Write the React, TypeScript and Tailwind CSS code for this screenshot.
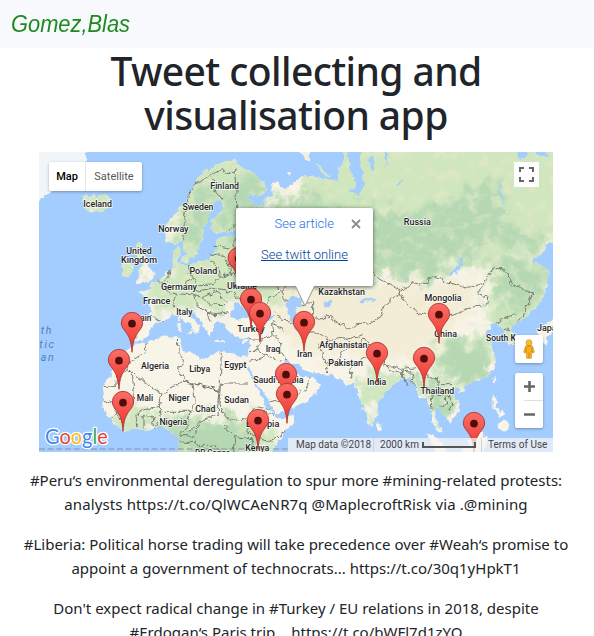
import React from "react";

const LAND = [
  // Eurasia joined with Africa
  "M600 32 L612 55 L640 68 L665 85 L690 108 L692 130 L670 146 L640 140 L628 148 L650 158 L660 178 L682 176 L690 150 L708 140 L705 112 L722 102 L735 120 L752 118 L775 102 L797 88 L837 86 L877 96 L905 98 L908 62 L922 45 L930 -20 L1600 -20 L1600 260 L1560 278 L1535 292 L1515 318 L1488 335 L1490 345 L1522 350 L1538 368 L1535 400 L1525 440 L1500 480 L1465 510 L1432 530 L1428 545 L1440 570 L1436 588 L1416 588 L1410 562 L1396 540 L1385 526 L1362 530 L1366 545 L1350 546 L1350 562 L1370 575 L1364 602 L1378 630 L1380 652 L1366 676 L1338 690 L1306 705 L1280 716 L1277 726 L1258 716 L1248 732 L1264 762 L1272 786 L1260 802 L1242 826 L1232 812 L1212 786 L1202 775 L1197 790 L1203 820 L1220 850 L1205 850 L1188 818 L1182 780 L1172 750 L1157 752 L1147 730 L1132 710 L1122 690 L1097 695 L1076 710 L1045 736 L1026 760 L1024 800 L1007 834 L996 826 L982 785 L962 728 L955 706 L934 712 L922 696 L905 694 L888 680 L840 678 L806 668 L786 648 L765 648 L752 632 L747 640 L770 668 L798 686 L824 690 L830 680 L852 714 L838 740 L808 762 L756 785 L722 798 L710 792 L706 770 L682 734 L656 700 L642 662 L636 655 L632 662 L655 702 L674 744 L694 780 L713 802 L724 812 L768 804 L776 806 L772 824 L748 852 L722 884 L690 940 L422 940 L430 890 L425 870 L400 846 L372 834 L345 845 L300 845 L260 850 L238 832 L215 802 L197 775 L205 750 L200 715 L224 680 L250 640 L272 612 L290 592 L290 584 L330 582 L380 566 L424 564 L437 570 L432 590 L442 606 L472 616 L504 638 L526 625 L552 610 L582 616 L632 624 L640 600 L640 572 L604 568 L578 555 L570 532 L548 520 L530 532 L532 550 L520 566 L508 548 L495 522 L478 500 L462 482 L452 480 L458 498 L480 522 L496 535 L488 544 L478 560 L470 540 L448 518 L430 506 L410 500 L386 518 L352 532 L342 555 L322 578 L298 580 L278 570 L282 508 L338 505 L342 480 L330 446 L305 434 L342 424 L345 410 L372 395 L402 366 L412 330 L412 305 L428 296 L434 318 L424 342 L442 352 L480 346 L518 330 L540 302 L542 278 L560 268 L604 262 L606 252 L580 250 L536 255 L526 240 L530 216 L562 184 L554 150 L538 160 L526 190 L512 215 L500 240 L502 270 L486 306 L474 332 L458 334 L444 310 L440 280 L418 288 L392 282 L386 244 L402 212 L448 166 L465 130 L490 82 L520 62 L560 44 Z",
  // Iceland
  "M138 160 L146 140 L160 150 L172 142 L205 140 L226 156 L226 176 L198 192 L170 194 L150 184 Z",
  // Great Britain and Ireland
  "M300 285 L318 290 L316 310 L334 330 L340 360 L358 375 L350 400 L318 402 L298 410 L310 388 L304 368 L312 345 L300 325 Z",
  "M258 345 L284 338 L294 356 L284 382 L258 388 Z",
  // Greenland
  "M-20 -20 L155 -20 L152 42 L110 60 L80 95 L46 130 L9 156 L-20 160 Z",
  // Danish isles, Sardinia, Corsica, Sicily, Crete, Cyprus
  "M438 326 L456 322 L458 342 L440 344 Z",
  "M424 528 L434 528 L434 550 L424 548 Z",
  "M426 506 L434 506 L432 522 L426 520 Z",
  "M450 552 L474 550 L470 564 Z",
  "M536 576 L562 577 L560 583 L536 581 Z",
  "M618 580 L634 577 L630 587 L618 587 Z",
  // Sri Lanka, Taiwan, Hainan, Philippines
  "M1022 822 L1036 828 L1038 846 L1026 850 Z",
  "M1370 684 L1380 682 L1376 706 L1370 704 Z",
  "M1268 720 L1286 716 L1284 730 L1270 734 Z",
  "M1370 744 L1384 744 L1386 764 L1378 778 L1392 790 L1386 794 L1370 776 Z",
  "M1384 796 L1400 790 L1406 800 L1392 810 Z M1386 828 L1404 815 L1418 826 L1412 848 L1390 846 Z",
  // Borneo, Sumatra
  "M1262 930 L1296 880 L1330 852 L1352 866 L1340 930 Z",
  "M1166 856 L1190 862 L1225 895 L1240 930 L1206 912 Z",
  // Japan
  "M1504 545 L1551 515 L1580 500 L1580 540 L1551 552 L1530 570 L1534 590 L1518 584 Z",
  // Novaya Zemlya and arctic isles
  "M782 -10 L812 -10 L824 36 L808 36 Z",
  "M836 46 L872 70 L884 88 L860 76 Z",
  "M754 70 L768 68 L768 82 L756 82 Z",
];

const INLAND_WATER = [
  "M934 -10 L974 -10 L970 50 L982 84 L984 116 L968 138 L944 136 L938 128 L960 120 L956 88 L940 64 Z",
  "M996 30 L1012 22 L1016 60 L1008 72 Z",
  "M1440 -10 L1476 -10 L1470 30 L1452 36 Z M1490 -10 L1530 -10 L1536 26 L1510 24 Z",
  "M588 484 L602 466 L618 472 L632 490 L650 478 L680 490 L716 508 L712 518 L680 518 L640 508 L604 516 L586 506 Z",
  "M656 470 L674 456 L682 462 L670 476 Z",
  "M748 466 L764 450 L794 450 L802 470 L780 478 L778 494 L792 506 L794 530 L814 540 L808 556 L778 552 L770 520 L752 490 Z",
  "M866 462 L888 458 L884 476 L868 478 Z",
  "M970 460 L990 450 L1020 452 L1018 458 L992 460 L976 470 Z",
  "M1238 384 L1262 354 L1272 326 L1280 330 L1276 354 L1258 380 L1242 388 Z",
  "M604 218 L616 216 L622 230 L608 236 Z M634 222 L642 210 L648 222 L640 230 Z",
  "M1390 110 L1396 108 L1398 150 L1412 172 L1404 170 L1392 144 Z",
  "M1090 98 L1100 92 L1096 112 L1086 116 Z M1046 12 L1054 12 L1050 60 Z",
];

// Boreal forest and other dark vegetation
const FOREST = [
  "M560 190 L604 60 L690 100 L690 180 L820 130 L900 180 L1000 170 L1090 200 L1210 180 L1380 90 L1400 200 L1480 250 L1540 270 L1480 310 L1400 290 L1340 310 L1240 350 L1180 390 L1100 400 L1000 350 L860 310 L740 280 L620 270 L540 250 Z",
  "M440 220 L480 130 L540 80 L530 200 L500 300 L450 330 Z",
  "M1370 390 L1410 340 L1540 350 L1530 430 L1450 520 L1400 500 L1400 430 Z",
  "M1210 620 L1250 580 L1330 600 L1380 640 L1340 690 L1260 710 L1220 680 Z",
  "M1130 690 L1220 720 L1260 800 L1240 820 L1190 800 L1160 745 Z",
  "M240 830 L300 838 L420 830 L560 820 L660 850 L640 940 L425 940 L400 850 L260 850 Z",
];

const MEADOW = [
  "M330 420 L420 340 L560 320 L740 300 L860 320 L900 410 L750 430 L700 480 L600 460 L570 510 L450 470 L340 500 Z",
  "M930 -60 L1640 -60 L1640 280 L1400 330 L1330 360 L1200 370 L1020 370 L860 300 L700 260 L800 100 Z",
  "M1370 330 L1560 320 L1560 450 L1440 600 L1400 600 L1360 500 Z",
  "M985 670 L1060 670 L1150 690 L1260 720 L1240 820 L1180 800 L1140 720 L1060 730 L1010 830 L970 740 Z",
  "M1200 560 L1280 580 L1330 540 L1380 600 L1370 680 L1280 710 L1190 690 Z",
  "M215 800 L330 790 L470 810 L650 800 L720 850 L700 940 L420 940 L390 840 L250 840 Z",
];

const DESERT = [
  "M740 440 L860 400 L980 420 L1090 410 L1200 420 L1330 410 L1300 480 L1220 560 L1190 620 L1060 640 L980 610 L880 640 L780 600 L700 520 Z",
];

const BORDERS = [
  "M440 280 L448 250 L446 200 L462 130 L480 104 L520 88 L530 76 L560 62 L584 78 L598 66",
  "M530 90 L540 130 L556 152 M596 62 L600 130 L602 180 L612 210 L586 245",
  "M604 262 L590 290 L598 320 L580 345 L584 376 L550 388 L546 356 L522 336",
  "M522 318 L560 322 L578 348 M536 292 L580 300",
  "M402 366 L398 390 L382 406 L366 398 M376 408 L390 430 L424 440 L410 462 L424 480 L432 504",
  "M456 350 L466 390 L490 410 L528 408 L550 388 M466 390 L450 404 L466 424 L490 432 L530 422 M430 438 L476 440 L500 448 L536 430 M476 440 L484 470 L512 496 L524 520",
  "M500 448 L520 468 L566 470 M536 430 L560 448 L574 466 M512 496 L540 500 L580 494 M530 420 L590 434 L620 462",
  "M584 376 L640 382 L700 396 L740 430 L690 460",
  "M340 505 L384 520 M296 520 L300 572",
  "M640 572 L680 574 L712 560 L706 530 L720 522 M706 530 L740 540 L746 552 M712 560 L730 578 L736 612 L752 636",
  "M680 574 L662 604 L640 612 M662 604 L690 622 L736 640 M640 640 L666 634 L690 622",
  "M700 762 L740 752 L780 742 L808 718 M808 718 L822 688",
  "M718 492 L746 520 L770 524 M740 430 L744 452 L760 454",
  "M800 470 L830 466 L830 504 L852 520 L870 500 L906 524 L940 544 L962 530 L1000 528 L1040 500 L1040 478 L1082 444 L1100 424",
  "M808 556 L848 554 L884 582 L900 566 L940 572 L980 560 M848 590 L860 620 L878 672 M862 640 L900 644 L920 610 L960 590 L984 570",
  "M984 570 L1000 590 L992 624 L962 640 L944 664 L944 694 M1000 590 L1040 620 L1044 648 L1098 664 L1150 658 M1050 650 L1060 668 L1098 672",
  "M740 430 L756 408 L850 400 L930 390 L1010 372 L1020 388 L1090 426 L1136 406 L1172 410 L1184 382 L1230 400 L1290 420 L1330 406 L1340 412",
  "M1090 426 L1100 454 L1142 492 L1200 506 L1250 502 L1312 476 L1352 466 L1356 448 L1322 440 L1340 412 L1370 362 L1406 362 L1430 412 L1466 428 L1490 432 L1466 500 L1442 520",
  "M1382 526 L1418 506 L1440 500 M1404 548 L1424 544",
  "M1100 668 L1100 690 L1118 712 M1100 672 L1130 676 L1126 700 L1142 720 M1150 658 L1180 690 L1200 690 L1216 710 M1164 710 L1184 730 L1188 780 M1200 690 L1212 720 L1240 744 L1250 768 L1238 786 M1188 734 L1226 742 L1232 768 L1208 778 M1216 710 L1254 710",
  "M330 582 L332 608 L286 640 L272 664 L378 736 L446 700 M424 566 L426 610 L442 640 L428 660 L446 700 L552 728 L556 612 M556 708 L636 708",
  "M200 716 L240 712 L242 678 L272 664 M286 680 L294 764 L232 770 M378 736 L370 772 L316 790 L300 800 L302 836 M370 772 L372 810 L362 832 M372 790 L462 790 L478 762 L470 702 M446 700 L552 728 L546 800 L500 820 L458 850",
  "M316 806 L352 808 L356 842 M324 806 L324 842 M462 790 L454 836 L430 862 L470 864 L500 822 M552 770 L570 812 L640 816 L632 850 L660 870 M560 830 L600 866 L646 872 M556 708 L552 770",
  "M646 790 L640 816 M646 790 L690 790 L712 806 M646 790 L660 776 L700 784 M660 870 L700 880 L750 850 M202 754 L232 770 L240 800 L226 814 M240 800 L258 820",
  "M430 882 L480 884 L500 896 L540 894 L560 912 M600 868 L594 912 M646 872 L650 912 M470 864 L480 884",
];

const LABELS: [string, number, number, number][] = [
  ["Finland", 566, 123, 86], ["Iceland", 185, 177, 86], ["Sweden", 486, 186, 93],
  ["Norway", 412, 252, 91], ["United", 309, 318, 77], ["Kingdom", 309, 345, 108],
  ["Poland", 502, 378, 83], ["Germany", 429, 427, 108], ["Ukraine", 618, 423, 90],
  ["France", 362, 469, 82], ["Italy", 445, 502, 49], ["Spain", 315, 520, 62],
  ["Turkey", 645, 553, 82], ["Iraq", 711, 612, 44], ["Iran", 806, 628, 46],
  ["Afghanistan", 922, 600, 145], ["Pakistan", 929, 655, 104], ["Kazakhstan", 917, 442, 140],
  ["Russia", 1144, 231, 81], ["Mongolia", 1221, 460, 111], ["China", 1229, 568, 68],
  ["India", 1022, 712, 58], ["Thailand", 1204, 739, 101], ["South Korea", 1420, 579, 140],
  ["Japan", 1540, 550, 74], ["Algeria", 357, 663, 84], ["Libya", 491, 672, 63],
  ["Egypt", 598, 661, 66], ["Saudi Arabia", 727, 706, 151], ["Mali", 327, 760, 49],
  ["Niger", 429, 760, 63], ["Chad", 508, 792, 60], ["Sudan", 602, 765, 74],
  ["Nigeria", 412, 832, 83], ["Ethiopia", 680, 838, 100], ["Kenya", 664, 908, 72],
  ["DR Congo", 530, 924, 106],
];

const PINS = [
  [608, 331], [645, 454], [672, 496], [1209, 499], [804, 523], [288, 526], [1023, 616],
  [1164, 631], [249, 637], [750, 679], [753, 739], [261, 763], [666, 817], [1314, 826],
];

function Pin({ x, y }: { x: number; y: number }) {
  return (
    <g transform={`translate(${x} ${y + 1})`}>
      <path
        d="M0 86 C-2 50 -10 37 -21 22 C-28 13 -32 7 -32 -2 A32 32 0 0 1 32 -2 C32 7 28 13 21 22 C10 37 2 50 0 86 Z"
        fill="url(#pinFill)"
        stroke="#a8322c"
        strokeWidth="2.5"
      />
      <circle r="11.5" fill="#4f0d0b" />
    </g>
  );
}

function MapDrawing() {
  return (
    <svg viewBox="9 12 1542 900" className="block h-[300px] w-[514px]" fontFamily="Roboto, sans-serif">
      <defs>
        <clipPath id="land">
          {LAND.map((d, i) => <path key={i} d={d} />)}
        </clipPath>
        <linearGradient id="pinFill" x1="0" y1="0" x2="0" y2="1">
          <stop offset="0" stopColor="#fb6f67" />
          <stop offset="0.6" stopColor="#f14a42" />
          <stop offset="1" stopColor="#d93a32" />
        </linearGradient>
        <filter id="coast" x="-30" y="-30" width="1640" height="1000" filterUnits="userSpaceOnUse" colorInterpolationFilters="sRGB">
          <feTurbulence type="fractalNoise" baseFrequency="0.05" numOctaves="3" seed="4" />
          <feDisplacementMap in="SourceGraphic" scale="20" xChannelSelector="R" yChannelSelector="G" />
        </filter>
        <filter id="patch" x="-60" y="-60" width="1700" height="1060" filterUnits="userSpaceOnUse" colorInterpolationFilters="sRGB">
          <feTurbulence type="fractalNoise" baseFrequency="0.025" numOctaves="4" seed="9" result="n" />
          <feGaussianBlur in="SourceGraphic" stdDeviation="12" />
          <feDisplacementMap in2="n" scale="120" xChannelSelector="R" yChannelSelector="G" />
        </filter>
        <filter id="mottle" x="0" y="0" width="100%" height="100%" colorInterpolationFilters="sRGB">
          <feTurbulence type="fractalNoise" baseFrequency="0.03" numOctaves="5" seed="21" />
          <feColorMatrix values="0 0 0 0 0.91  0 0 0 0 0.92  0 0 0 0 0.79  3 0 0 0 -1.45" />
        </filter>
      </defs>
      <rect x="9" y="12" width="1542" height="900" fill="#a3ccff" />
      <g filter="url(#coast)">
        <g clipPath="url(#land)">
          <rect x="-30" y="-30" width="1640" height="1000" fill="#f8f4e8" />
          <g filter="url(#patch)">
            {MEADOW.map((d, i) => <path key={i} d={d} fill="#d0e6bf" />)}
            <path d="M420 12 H700 V340 H300 V440 H250 V280 H420 Z M130 130 H240 V200 H130 Z" fill="#d0e6bf" />
          </g>
          <g filter="url(#patch)">
            {FOREST.map((d, i) => <path key={i} d={d} fill="#b5d8b3" />)}
          </g>
          <g filter="url(#patch)">
            {DESERT.map((d, i) => <path key={i} d={d} fill="#f3ecd6" />)}
          </g>
          <rect x="380" y="-20" width="1220" height="500" filter="url(#mottle)" opacity="0.6" />
          <path d="M-20 -20 L155 -20 L152 42 L110 60 L80 95 L46 130 L9 156 L-20 170 Z" fill="#f1f5f8" />
        </g>
        {INLAND_WATER.map((d, i) => <path key={i} d={d} fill="#a3ccff" />)}
      </g>
      <g filter="url(#coast)" fill="none" stroke="#6f736b" strokeWidth="2.8" strokeLinejoin="round">
        {BORDERS.map((d, i) => <path key={i} d={d} />)}
      </g>
      <path d="M9 903 H760" stroke="#8d8f9c" strokeWidth="3.5" strokeDasharray="18 8" />
      <g fill="#4f82bd" fontSize="32" fontStyle="italic" letterSpacing="5">
        <text x="14" y="557">th</text>
        <text x="-12" y="600">ntic</text>
        <text x="14" y="640">an</text>
      </g>
      <g fontSize="26.5" fontWeight="500" fill="#222" stroke="#fff" strokeOpacity="0.85" strokeWidth="4.5" strokeLinejoin="round" paintOrder="stroke" textAnchor="middle">
        {LABELS.map(([name, x, y, width]) => (
          <text key={name} x={x} y={y} textLength={width} lengthAdjust="spacingAndGlyphs">{name}</text>
        ))}
      </g>
      {PINS.map(([x, y]) => <Pin key={`${x}-${y}`} x={x} y={y} />)}
      <text x="27" y="889" fontFamily="Lato, sans-serif" fontSize="65" fontWeight="400" textLength="188" lengthAdjust="spacingAndGlyphs" stroke="#fff" strokeWidth="8" paintOrder="stroke" strokeLinejoin="round">
        <tspan fill="#4285f4">G</tspan><tspan fill="#ea4335">o</tspan><tspan fill="#fbbc05">o</tspan><tspan fill="#4285f4">g</tspan><tspan fill="#34a853">l</tspan><tspan fill="#ea4335">e</tspan>
      </text>
    </svg>
  );
}

function Pegman() {
  return (
    <svg viewBox="0 0 36 60" className="h-5 w-3">
      <path d="M7 22 Q18 16 29 22 L34 40 L29 42 L27 36 L25 58 H11 L9 36 L7 42 L2 40 Z" fill="#f5b01e" stroke="#c9851a" strokeWidth="1.5" />
      <path d="M18 40 V58 M9 24 V38 M27 24 V38" stroke="#c37a15" strokeWidth="2" />
      <circle cx="18" cy="11" r="9" fill="#f9bd2c" stroke="#c9851a" strokeWidth="1.5" />
      <path d="M11 19 Q18 25 25 19" fill="none" stroke="#b87412" strokeWidth="2" />
    </svg>
  );
}

function InfoWindow() {
  return (
    <div className="absolute left-[197px] top-[56px] h-[78px] w-[137px] rounded-[2px] bg-white text-left font-[Roboto,sans-serif] text-[13px] font-light shadow-[0_1px_4px_rgba(0,0,0,0.6)]">
      <svg viewBox="0 0 24 22" className="absolute left-[57px] top-[77px] h-[22px] w-6">
        <path d="M2 0 L12 21 L22 0" fill="#fff" stroke="#9a9a9a" strokeWidth="1" />
        <path d="M2 0 H22" stroke="#fff" strokeWidth="2" />
      </svg>
      <div className="flex items-center pl-[38.5px] pt-[7px] leading-[18px]">
        <a className="whitespace-nowrap text-[#1f6fe5]">See article</a>
        <svg viewBox="0 0 10 10" className="ml-[17px] size-[10px]">
          <path d="M1 1 L9 9 M9 1 L1 9" stroke="#8c8c8c" strokeWidth="1.8" />
        </svg>
      </div>
      <a className="ml-[25px] mt-[13px] block whitespace-nowrap leading-[18px] text-[#00459c] underline">See twitt online</a>
    </div>
  );
}

function MapPanel() {
  return (
    <div className="relative mx-auto mt-4 h-[300px] w-[514px] overflow-hidden font-[Roboto,sans-serif]">
      <MapDrawing />
      <InfoWindow />
      <div className="absolute left-[10px] top-[10px] flex h-[29px] w-[93px] rounded-[2px] bg-white text-[11px] leading-[29px] shadow-[0_1px_3px_rgba(0,0,0,0.3)]">
        <span className="w-[37px] border-r border-gray-200 text-center font-medium text-black">Map</span>
        <span className="flex-1 text-center text-[#565656]">Satellite</span>
      </div>
      <div className="absolute left-[475px] top-[10px] flex size-[25px] items-center justify-center bg-white">
        <svg viewBox="0 0 15 15" className="size-[15px]">
          <path d="M1 5 V1 H5 M10 1 H14 V5 M14 10 V14 H10 M5 14 H1 V10" fill="none" stroke="#666" strokeWidth="2" />
        </svg>
      </div>
      <div className="absolute left-[476px] top-[183px] flex h-7 w-7 items-center justify-center rounded-[2px] bg-white shadow-[0_1px_3px_rgba(0,0,0,0.3)]">
        <Pegman />
      </div>
      <div className="absolute left-[476px] top-[221px] h-[55px] w-7 rounded-[2px] bg-white shadow-[0_1px_3px_rgba(0,0,0,0.3)]">
        <svg viewBox="0 0 28 55" className="block h-[55px] w-7">
          <path d="M9 13.5 H20 M14.5 8 V19 M9 41.5 H20" stroke="#666" strokeWidth="2.6" />
          <path d="M9 27.5 H28" stroke="#e0e0e0" />
        </svg>
      </div>
      <div className="absolute bottom-0 left-[249px] flex h-[14px] w-[265px] items-center whitespace-nowrap bg-[#f5f5f5]/75 text-[10px] leading-[14px] text-[#444]">
        <span className="w-[86px] border-r border-[#d0d3d8] pl-[6px] tracking-[0.02px]">Map data ©2018</span>
        <span className="flex w-[108px] items-center border-r border-[#d0d3d8] pl-[6px] tracking-[0.02px]">
          2000 km
          <svg viewBox="0 0 54 8" className="ml-[3px] h-2 w-[54px]">
            <path d="M1 1 V6 H53 V1" fill="none" stroke="#555" strokeWidth="2" />
          </svg>
        </span>
        <span className="pl-[6px] tracking-[0.02px]">Terms of Use</span>
      </div>
    </div>
  );
}

export default function App() {
  return (
    <div className="h-[636px] w-[594px] overflow-hidden bg-white text-[#212529]">
      <nav className="flex h-12 items-center bg-[#f7f9fc] pl-[11px]">
        <a className="origin-left scale-x-[0.95] font-['Liberation_Sans',sans-serif] text-[23px] italic text-[#1d8a1d]">Gomez,Blas</a>
      </nav>
      <main className="w-[592px] text-center font-['Noto_Sans',sans-serif]">
        <h1 className="relative top-px whitespace-nowrap text-[39px] font-medium leading-[44px] tracking-[-0.6px]">
          Tweet collecting and<br />visualisation app
        </h1>
        <MapPanel />
        <div className="mt-4 flex flex-col gap-4 whitespace-nowrap text-[15px] leading-6">
          <p>#Peru‘s environmental deregulation to spur more #mining-related protests:<br /><span className="tracking-[0.11px]">analysts https://t.co/QlWCAeNR7q @MaplecroftRisk via .@mining</span></p>
          <p>#Liberia: Political horse trading will take precedence over #Weah‘s promise to<br />appoint a government of technocrats... https://t.co/30q1yHpkT1</p>
          <p>Don't expect radical change in #Turkey / EU relations in 2018, despite<br />#Erdogan‘s Paris trip... https://t.co/bWFl7d1zYQ</p>
        </div>
      </main>
    </div>
  );
}
